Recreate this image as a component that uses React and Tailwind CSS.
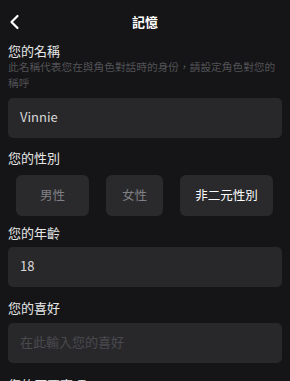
const font = { fontFamily: '"Noto Sans CJK TC", "Noto Sans", sans-serif' };

function Label({ children, className = "" }) {
  return (
    <div className={`px-2 text-[13px] leading-[18px] text-[#e6e6e6] ${className}`}>{children}</div>
  );
}

function Input({ value, placeholder, className = "" }) {
  return (
    <div className={`mx-2 h-[40px] rounded-[5px] bg-[#28282b] flex items-center px-3 pb-[3px] text-[13px] ${className}`}>
      {value ? (
        <span className="text-[#d8d8d8]">{value}</span>
      ) : (
        <span className="text-[#4a4a4e]">{placeholder}</span>
      )}
    </div>
  );
}

export default function App() {
  const genders = [
    { label: "男性", width: "w-[73px]", active: false },
    { label: "女性", width: "w-[57px]", active: false },
    { label: "非二元性別", width: "w-[93px]", active: true }
  ];

  return (
    <div className="w-[290px] h-[381px] overflow-hidden bg-[#151517]" style={font}>
      {/* header */}
      <div className="relative h-[44px] flex items-center justify-center">
        <svg className="absolute left-[8px] top-[14px]" width="14" height="16" viewBox="0 0 14 16">
          <path d="M9.5 2 L3.5 8 L9.5 14" fill="none" stroke="#ffffff" strokeWidth="2.2" strokeLinecap="round" strokeLinejoin="round" />
        </svg>
        <span className="text-[13px] font-bold text-white">記憶</span>
      </div>

      <div className="px-2 text-[13px] leading-[14px] text-[#e6e6e6]">您的名稱</div>
      <div className="px-2 mt-px text-[10.7px] leading-[16px] text-[#525256]">
        此名稱代表您在與角色對話時的身份，請設定角色對您的稱呼
      </div>
      <Input value="Vinnie" className="mt-[7px]" />

      <Label className="mt-[11px]">您的性別</Label>
      <div className="mt-2 flex gap-[17px] px-4">
        {genders.map(g => (
          <div
            key={g.label}
            className={`${g.width} h-[41px] rounded-[6px] bg-[#2a2a2d] flex items-center justify-center text-[12.5px] ${g.active ? "text-white" : "text-[#808084]"}`}
          >
            {g.label}
          </div>
        ))}
      </div>

      <Label className="mt-2">您的年齡</Label>
      <Input value="18" className="mt-[5px]" />

      <Label className="mt-3">您的喜好</Label>
      <Input placeholder="在此輸入您的喜好" className="mt-[6px]" />

      <Label className="mt-[13px]">您的厭惡事項</Label>
    </div>
  );
}
